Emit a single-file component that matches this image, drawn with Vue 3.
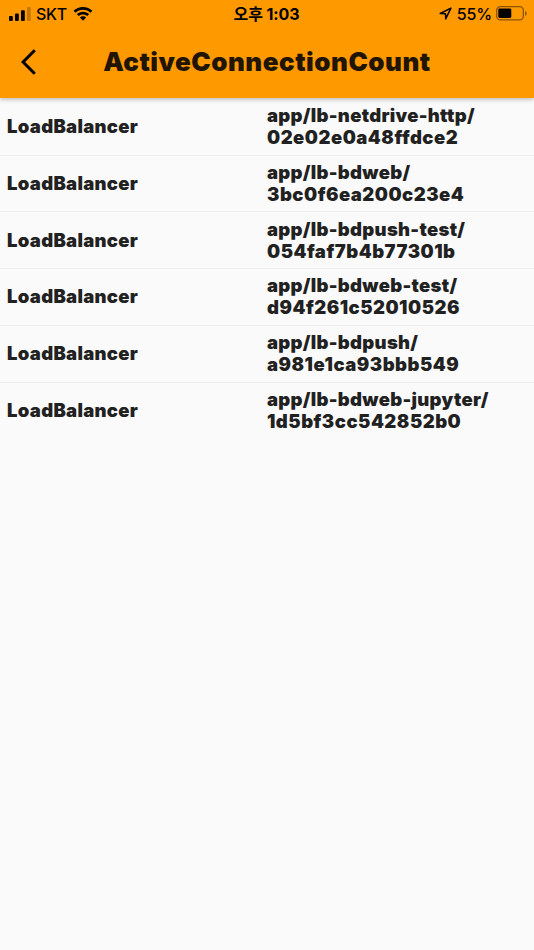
<!-- MetricDetail.vue -->
<script setup>
import { ref } from "vue";

const title = ref("ActiveConnectionCount");

const loadBalancers = ref([
  { name: "app/lb-netdrive-http/", id: "02e02e0a48ffdce2" },
  { name: "app/lb-bdweb/", id: "3bc0f6ea200c23e4" },
  { name: "app/lb-bdpush-test/", id: "054faf7b4b77301b" },
  { name: "app/lb-bdweb-test/", id: "d94f261c52010526" },
  { name: "app/lb-bdpush/", id: "a981e1ca93bbb549" },
  { name: "app/lb-bdweb-jupyter/", id: "1d5bf3cc542852b0" },
]);
</script>

<template>
  <div class="screen">
    <header class="app-bar">
      <div class="status-bar">
        <div class="status-left">
          <svg class="signal" width="22" height="14" viewBox="0 0 22 14">
            <rect x="0" y="9" width="3.8" height="5" rx="1" />
            <rect x="6" y="6.4" width="3.8" height="7.6" rx="1" />
            <rect x="12" y="3.2" width="3.8" height="10.8" rx="1" />
            <rect x="18" y="0" width="3.8" height="14" rx="1" opacity="0.22" />
          </svg>
          <span class="carrier">SKT</span>
          <svg class="wifi" width="20" height="14" viewBox="0 0 20 14">
            <path d="M10 0C6.3 0 3 1.400.6 3.700L2.500 5.700C4.400 3.900 7 2.800 10 2.800S15.600 3.900 17.500 5.700L19.400 3.700C17 1.400 13.700 0 10 0Z" />
            <path d="M10 4.700C7.600 4.700 5.400 5.600 3.800 7.100L5.700 9.100C6.800 8.100 8.300 7.400 10 7.400S13.200 8.100 14.300 9.100L16.200 7.100C14.600 5.600 12.400 4.700 10 4.700Z" />
            <path d="M10 9.200C8.800 9.200 7.700 9.700 6.900 10.400L10 13.700L13.100 10.400C12.300 9.700 11.200 9.200 10 9.200Z" />
          </svg>
        </div>
        <span class="clock">오후 1:03</span>
        <div class="status-right">
          <svg class="location" width="13" height="13" viewBox="0 0 13 13">
            <path d="M1.200 6.500L11.900 1.100L6.700 11.900L6.500 6.700Z" />
          </svg>
          <span class="percent">55%</span>
          <svg class="battery" width="31" height="15" viewBox="0 0 31 15">
            <rect class="shell" x="0.7" y="0.7" width="26.600" height="13.200" rx="3.600" />
            <rect x="2.300" y="2.600" width="13" height="9.400" rx="1.400" />
            <path d="M29 4.900V9.900C30 9.500 30.700 8.600 30.700 7.400S30 5.300 29 4.900Z" opacity="0.45" />
          </svg>
        </div>
      </div>
      <div class="toolbar">
        <button class="back" aria-label="Back">
          <svg width="16" height="26" viewBox="0 0 16 26">
            <path d="M14.800 1.300L3.100 13L14.800 24.700" />
          </svg>
        </button>
        <h1>{{ title }}</h1>
      </div>
    </header>

    <ul class="list">
      <li v-for="lb in loadBalancers" :key="lb.id" class="row">
        <span class="label">LoadBalancer</span>
        <div class="value">
          <div>{{ lb.name }}</div>
          <div class="hash">{{ lb.id }}</div>
        </div>
      </li>
    </ul>
  </div>
</template>

<style>
body {
  background-color: #fafafa;
}
</style>

<style scoped>
.screen {
  min-height: 950px;
  background-color: #fafafa;
  color: #212121;
  font-family: Inter, "Noto Sans CJK KR", sans-serif;
}

.app-bar {
  position: relative;
  height: 98px;
  background-color: #ff9900;
  box-shadow: 0 1px 5px rgba(0, 0, 0, 0.3);
}

.status-bar {
  display: grid;
  grid-template-columns: 1fr auto 1fr;
  align-items: center;
  height: 27px;
  padding: 0 8px 0 9px;
  box-sizing: border-box;
  color: #000;
  font-size: 16px;
  line-height: 25px;
}

.status-left,
.status-right {
  display: flex;
  align-items: center;
}

.status-right {
  justify-content: flex-end;
  margin-right: -1px;
}

.carrier {
  margin: 2px 6px 0 5px;
  font-weight: 500;
  letter-spacing: -0.3px;
}

.clock {
  padding: 2px 2px 0 0;
  font-weight: 700;
  letter-spacing: -0.1px;
}

.percent {
  margin: 2px 4px 0 5px;
  font-weight: 500;
  letter-spacing: -0.1px;
}

.location {
  fill: none;
  stroke: #000;
  stroke-width: 1.5;
  stroke-linejoin: round;
}

.battery .shell {
  fill: none;
  stroke: rgba(0, 0, 0, 0.45);
  stroke-width: 1.3;
}

.toolbar {
  display: grid;
  grid-template-columns: 58px 1fr 58px;
  align-items: center;
  height: 70px;
}

.back {
  display: flex;
  margin-left: 20px;
  padding: 0;
  border: none;
  background: none;
}

.back path {
  fill: none;
  stroke: #000;
  stroke-width: 3;
}

h1 {
  margin: 0;
  color: #211400;
  font-size: 26px;
  font-weight: 900;
  letter-spacing: 0.5px;
  line-height: 32px;
  text-align: center;
}

.list {
  margin: 0;
  padding: 0.8px 0 0;
  list-style: none;
}

.row {
  display: grid;
  grid-template-columns: 1fr 1fr;
  align-items: center;
  height: 56.75px;
  padding-bottom: 0.9px;
  box-sizing: border-box;
  border-bottom: 1px solid #eeeeee;
  font-size: 18.5px;
  font-weight: 900;
  letter-spacing: 0.3px;
  line-height: 22px;
}

.row:last-child {
  border-bottom-color: transparent;
}

.label {
  padding-left: 7px;
}

.hash {
  letter-spacing: 0.5px;
}
</style>
